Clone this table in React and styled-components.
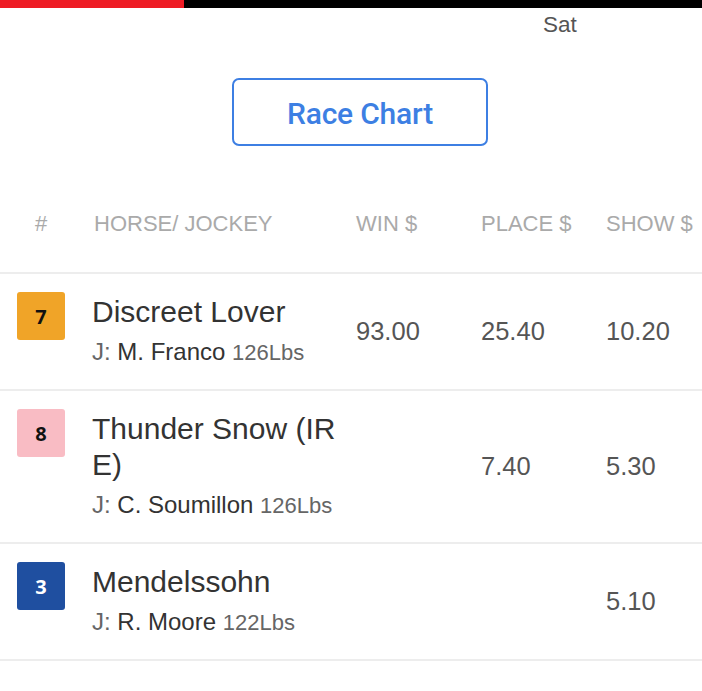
import React from "react";
import styled, { createGlobalStyle } from "styled-components";

const Global = createGlobalStyle`
  html, body { margin: 0; padding: 0; background: #fff; }
  body { font-family: "Liberation Sans", Arial, sans-serif; }
  * { box-sizing: border-box; }
`;

const Page = styled.div`
  width: 702px;
  min-height: 691px;
  overflow: hidden;
`;

const ProgressBar = styled.div`
  display: flex;
  height: 8px;
  background: #000;
`;

const ProgressFill = styled.div`
  width: ${(p) => p.$w}px;
  background: #ee1c25;
`;

const DayRow = styled.div`
  display: flex;
  padding: 4px 0 0 543px;
`;

const Day = styled.span`
  font-size: 22.5px;
  line-height: 26px;
  color: #555;
`;

const ButtonWrap = styled.div`
  display: flex;
  justify-content: flex-start;
  padding: 40px 0 30px 232px;
`;

const ChartButton = styled.button`
  width: 256px;
  height: 68px;
  border: 2px solid #3d7fe3;
  border-radius: 7px;
  background: #fff;
  color: #3d7fe3;
  font-family: Roboto, "Liberation Sans", sans-serif;
  font-weight: 500;
  font-size: 30px;
  letter-spacing: -0.2px;
  padding: 2px 0 0;
  cursor: pointer;
`;

const Grid = styled.div`
  display: grid;
  grid-template-columns: 92px 264px 125px 125px 1fr;
  align-items: center;
  border-bottom: 2px solid #ededed;
`;

const HeaderRow = styled(Grid)`
  height: 98px;
`;

const HeadCell = styled.div`
  font-size: 22px;
  color: #aaa;
  text-align: ${(p) => (p.$center ? "center" : "left")};
  padding-left: ${(p) => p.$pl || "0"};
  padding-right: ${(p) => (p.$center ? "27px" : "0")};
`;

const BadgeCell = styled.div`
  align-self: start;
  padding: 18px 0 0 17px;
`;

const Badge = styled.div`
  width: 48px;
  height: 48px;
  border-radius: 3px;
  background: ${(p) => p.$bg};
  color: ${(p) => p.$fg};
  display: flex;
  align-items: center;
  justify-content: center;
  font-family: "Open Sans", "Noto Sans", sans-serif;
  font-weight: 700;
  font-size: 20px;
`;

const NameCell = styled.div`
  align-self: start;
  padding: 20px 4px 20px 0;
`;

const HorseName = styled.div`
  font-size: 30px;
  line-height: 36px;
  color: #333;
  word-break: break-all;
  margin-bottom: 6px;
`;

const Jockey = styled.div`
  font-size: 24px;
  line-height: 32px;
  color: #333;
`;

const Muted = styled.span`
  color: #666;
  font-size: ${(p) => p.$size || "inherit"};
`;

const Value = styled.div`
  font-size: 25.5px;
  color: #555;
`;

const rows = [
  { no: "7", bg: "#f0a428", fg: "#111", name: "Discreet Lover", jockey: "M. Franco", lbs: "126Lbs", win: "93.00", place: "25.40", show: "10.20" },
  { no: "8", bg: "#f9bcc4", fg: "#111", name: "Thunder Snow (IRE)", jockey: "C. Soumillon", lbs: "126Lbs", win: "", place: "7.40", show: "5.30" },
  { no: "3", bg: "#1f4fa0", fg: "#fff", name: "Mendelssohn", jockey: "R. Moore", lbs: "122Lbs", win: "", place: "", show: "5.10" },
];

export default function App() {
  return (
    <Page>
      <Global />
      <ProgressBar>
        <ProgressFill $w={184} />
      </ProgressBar>
      <DayRow>
        <Day>Sat</Day>
      </DayRow>
      <ButtonWrap>
        <ChartButton>Race Chart</ChartButton>
      </ButtonWrap>
      <HeaderRow>
        <HeadCell $center $pl="17px">#</HeadCell>
        <HeadCell $pl="2px">HORSE/ JOCKEY</HeadCell>
        <HeadCell>WIN $</HeadCell>
        <HeadCell>PLACE $</HeadCell>
        <HeadCell>SHOW $</HeadCell>
      </HeaderRow>
      {rows.map((r) => (
        <Grid key={r.no}>
          <BadgeCell>
            <Badge $bg={r.bg} $fg={r.fg}>{r.no}</Badge>
          </BadgeCell>
          <NameCell>
            <HorseName>{r.name}</HorseName>
            <Jockey>
              <Muted>J: </Muted>
              {r.jockey} <Muted $size="22px">{r.lbs}</Muted>
            </Jockey>
          </NameCell>
          <Value>{r.win}</Value>
          <Value>{r.place}</Value>
          <Value>{r.show}</Value>
        </Grid>
      ))}
    </Page>
  );
}
